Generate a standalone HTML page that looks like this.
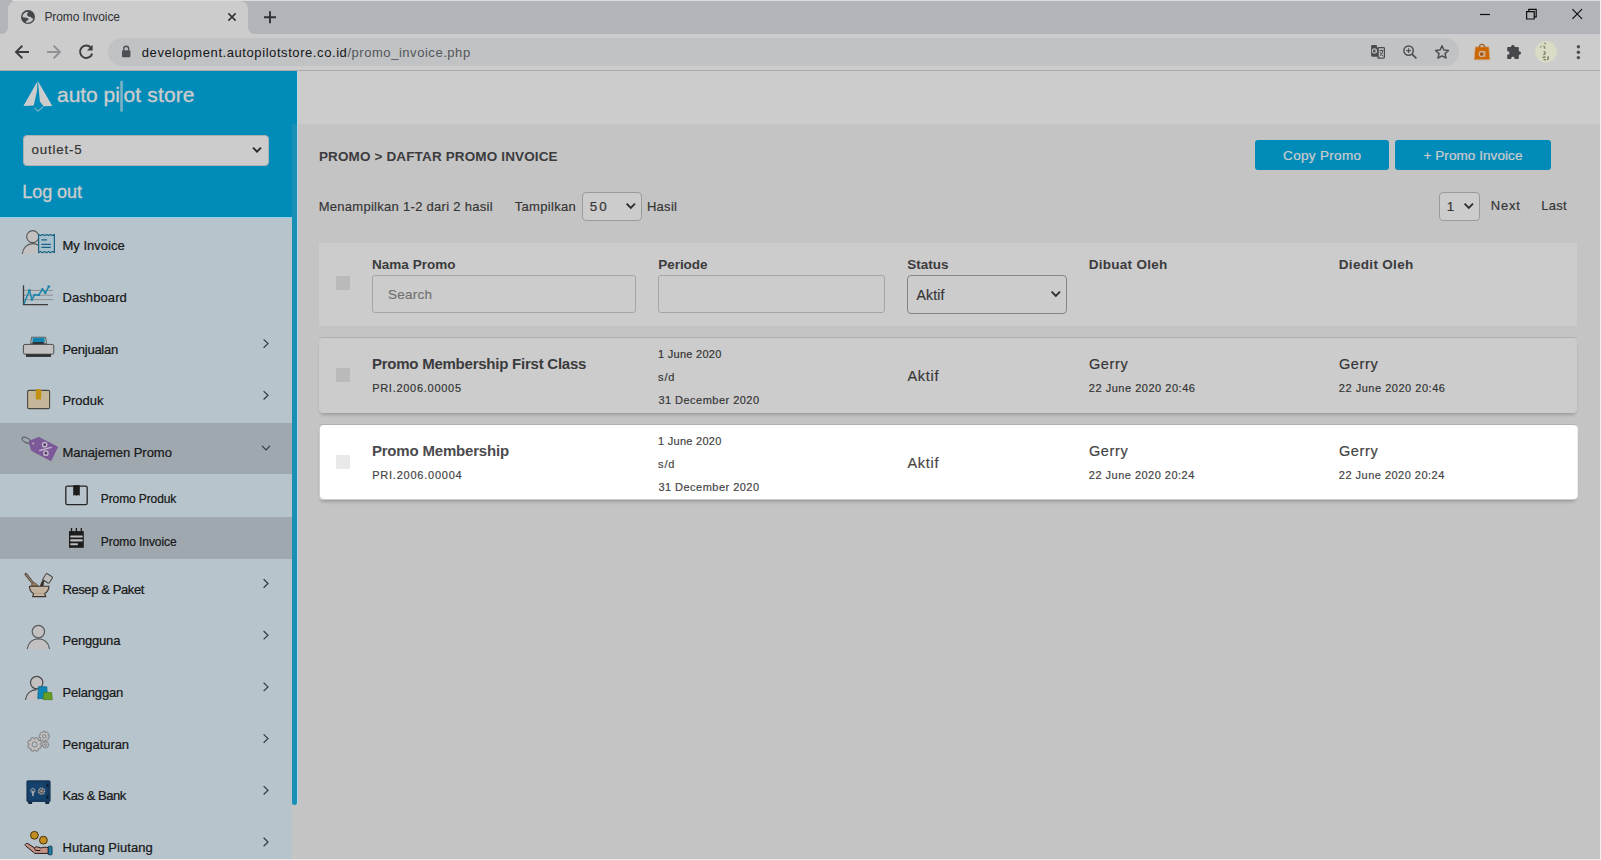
<!DOCTYPE html>
<html>
<head>
<meta charset="utf-8">
<title>Promo Invoice</title>
<style>
*{box-sizing:border-box;margin:0;padding:0}
html,body{width:1601px;height:860px;overflow:hidden;background:#f6f6f6}
body{font-family:"Liberation Sans",sans-serif;color:#444;position:relative}
.abs,.t{position:absolute}
.t{white-space:nowrap;line-height:1;transform-origin:0 0}
svg{position:absolute;overflow:visible}
/* ---------- browser chrome ---------- */
#tabstrip{left:0;top:0;width:1601px;height:34px;background:#dee1e6}
#tab{left:8px;top:1px;width:240px;height:33px;background:#fff;border-radius:8px 8px 0 0}
#toolbar{left:0;top:34px;width:1601px;height:36px;background:#fff}
#tbline{left:0;top:70px;width:1601px;height:1px;background:#d4d6da}
#omni{left:108px;top:38px;width:1351px;height:28px;border-radius:14px;background:#f1f3f4}
/* ---------- page ---------- */
#sidehead{left:0;top:71px;width:297px;height:146px;background:#00aee8}
#sidemenu{left:0;top:217px;width:292px;height:643px;background:#e5f6ff}
#topbar{left:297px;top:71px;width:1304px;height:53px;background:#fff}
#thumb{left:292px;top:124px;width:5px;height:681px;background:#1fb4e3;border-radius:0 0 3px 3px}
.act{left:0;width:292px;background:#c7d2da}
.btn{background:#00aee8;border-radius:3px;height:30px;top:140px}
.box{background:#fff;border:1px solid #bbb;border-radius:4px}
.m{color:#222;-webkit-text-stroke:.22px #222}
.sk{-webkit-text-stroke-width:.18px}
.hv{-webkit-text-stroke:.3px #fff}
.cb{width:14px;height:14px;background:#e9e9e9}
#thead{left:319px;top:243px;width:1258px;height:83px;background:#fff}
#row1{left:319px;top:337px;width:1258.3px;height:76px;background:#fff;border-top:1px solid #dcdcdc;border-radius:4px;box-shadow:0 3.5px 4px -2.5px rgba(0,0,0,.3)}
#row2{left:319px;top:424px;width:1258.3px;height:76px;background:#fff;border-top:1px solid #dcdcdc;border-radius:4px;box-shadow:0 3.5px 4px -2.5px rgba(0,0,0,.3)}
#dim{left:320px;top:425px;width:1257.5px;height:74.3px;border-radius:4px;box-shadow:0 0 0 3000px rgba(0,0,0,.2);pointer-events:none}
#botline{left:0;top:859px;width:1601px;height:1px;background:#eeeeee}
</style>
</head>
<body>
<!-- CHROME -->
<div class="abs" id="tabstrip"></div>
<div class="abs" id="tab"></div>
<div class="abs" id="toolbar"></div>
<div class="abs" id="tbline"></div>
<div class="abs" id="omni"></div>
<!--CHROME-CONTENT-START-->
<!-- top-left outer curves of tab -->
<svg style="left:0;top:0" width="260" height="34" viewBox="0 0 260 34">
  <path d="M0 34 C6 34 8 31 8 26 L8 34 Z" fill="#fff"/>
  <path d="M248 34 L248 26 C248 31 250 34 256 34 Z" fill="#fff"/>
  <!-- globe favicon -->
  <circle cx="28" cy="17" r="7" fill="#54585d"/>
  <path d="M22.5 16.9 C22.5 14.6 24.2 12.5 26.4 11.9 L28.6 12 C27.6 12.7 27.1 13.8 27.2 15 C27.3 15.9 27.9 16.4 28.9 16.6 L30.6 17 C31.4 17.4 31.6 18.2 32.5 18.4 L33.4 18.2 C33.1 20 31.8 21.5 30.2 22.2 C28.8 22.8 27.2 22.8 26 22.4 C26 21.6 26.5 21 27.4 20.6 C28.5 20.2 28.9 19.2 28.3 18.6 C27.8 18 26.8 17.7 25.6 17.5 C24.4 17.5 23.3 17.4 22.5 16.9 Z" fill="#fbfbfb"/>
  <!-- close x -->
  <path d="M228.4 13.4 L235.6 20.6 M235.6 13.4 L228.4 20.6" stroke="#3c4043" stroke-width="1.5" fill="none"/>
  <!-- new tab + -->
  <path d="M264 17.2 H276 M270 11.2 V23.2" stroke="#3c4043" stroke-width="1.9" fill="none"/>
</svg>
<div class="t" style="left:44.40px;top:10.71px;font-size:12px;color:#3c4043;letter-spacing:-0.091px" id="c_tab">Promo Invoice</div>
<!-- window controls -->
<svg style="left:1470px;top:0" width="131" height="34" viewBox="1470 0 131 34">
  <path d="M1480 14.5 H1490" stroke="#111" stroke-width="1.2"/>
  <path d="M1526.6 11.6 H1534.2 V19 H1526.6 Z M1528.8 11.4 V9.4 H1536.2 V16.8 H1534.4" stroke="#111" stroke-width="1.2" fill="none"/>
  <path d="M1572.4 9.2 L1582 18.8 M1582 9.2 L1572.4 18.8" stroke="#111" stroke-width="1.2"/>
</svg>
<!-- nav buttons -->
<svg style="left:0;top:34px" width="140" height="36" viewBox="0 34 140 36">
  <path d="M29 52 H16.5 M22.3 45.8 L16 52 L22.3 58.2" stroke="#4a4d51" stroke-width="1.9" fill="none"/>
  <path d="M47 52 H59.5 M53.7 45.8 L60 52 L53.7 58.2" stroke="#b4b7bb" stroke-width="1.9" fill="none"/>
  <path d="M90.9 47.6 A6.2 6.2 0 1 0 92.2 53.6" stroke="#4a4d51" stroke-width="1.9" fill="none"/>
  <path d="M92.6 44.8 V50.4 H87 Z" fill="#4a4d51"/>
  <!-- lock -->
  <rect x="122" y="50.2" width="8.4" height="7" rx="1" fill="#5f6368"/>
  <path d="M123.8 50.4 V48.6 A2.4 2.4 0 0 1 128.6 48.6 V50.4" stroke="#5f6368" stroke-width="1.4" fill="none"/>
</svg>
<div class="t" style="left:141.8px;top:45.6px;font-size:13px;color:#202124" id="c_url"><span id="c_url1" style="letter-spacing:0.576px">development.autopilotstore.co.id</span><span style="color:#6a6d71;letter-spacing:0.545px" id="c_url2">/promo_invoice.php</span></div>
<!-- right toolbar icons -->
<svg style="left:1360px;top:34px" width="241" height="36" viewBox="1360 34 241 36">
  <!-- translate -->
  <path d="M1372.2 45 H1376 Q1377 45 1377 46 V47.4 H1378 V56.7 H1372.2 Q1371.1 56.7 1371.1 55.6 V46.1 Q1371.1 45 1372.2 45 Z" fill="#5b5e62"/>
  <rect x="1378.2" y="47.7" width="6.2" height="10.4" rx=".8" fill="#f4f4f4" stroke="#5b5e62" stroke-width="1.2"/>
  <path d="M1377.6 56.6 L1379.4 58.7 H1377.6 Z" fill="#5b5e62"/>
  <circle cx="1374.5" cy="51" r="2.1" fill="none" stroke="#e8e8e8" stroke-width="1.1"/>
  <path d="M1374.6 51 H1376.6" stroke="#e8e8e8" stroke-width="1"/>
  <path d="M1379.4 50.6 H1383.4 M1381.4 49.6 V50.6 M1379.6 56.2 C1381.4 55 1382.4 53 1382.6 50.8 M1380 52.2 C1380.8 54 1381.8 55.2 1383.4 56.2" stroke="#5b5e62" stroke-width="1" fill="none"/>
  <!-- zoom -->
  <circle cx="1408.6" cy="50.6" r="4.7" fill="none" stroke="#5f6368" stroke-width="1.5"/>
  <path d="M1412 54.2 L1416.4 58.4" stroke="#5f6368" stroke-width="1.7"/>
  <path d="M1406.2 50.6 H1411 M1408.6 48.2 V53" stroke="#5f6368" stroke-width="1.1"/>
  <!-- star -->
  <path d="M1442 45.8 L1443.9 50 L1448.5 50.5 L1445 53.6 L1446 58.1 L1442 55.8 L1438 58.1 L1439 53.6 L1435.5 50.5 L1440.1 50 Z" fill="none" stroke="#5f6368" stroke-width="1.5" stroke-linejoin="round"/>
  <!-- orange bag -->
  <path d="M1475.2 46.8 H1488.9 L1490 59.8 H1474.1 Z" fill="#ff8000" stroke="#ffd9b0" stroke-width=".8" stroke-linejoin="round"/>
  <path d="M1479.2 47.6 C1479.2 43.2 1484.8 43.2 1484.8 47.6" stroke="#c97a3a" stroke-width="1.2" fill="none"/>
  <circle cx="1481.7" cy="54" r="2.5" fill="#c76a1c" stroke="#ffe0bd" stroke-width="1.3"/>
  <path d="M1484.7 50.9 V57" stroke="#ffe0bd" stroke-width="1.3"/>
  <!-- puzzle -->
  <path d="M1508 47.1 H1511.1 V46.6 C1511.1 44.3 1514.7 44.3 1514.7 46.6 V47.1 H1518 Q1518.8 47.1 1518.8 47.9 V51.2 H1519.2 C1521.6 51.2 1521.6 54.8 1519.2 54.8 H1518.8 V58.2 Q1518.8 59 1518 59 H1514.6 V58.4 C1514.6 56.2 1511.2 56.2 1511.2 58.4 V59 H1508 Q1507.2 59 1507.2 58.2 V54.7 H1507.8 C1510 54.7 1510 51.3 1507.8 51.3 H1507.2 V47.9 Q1507.2 47.1 1508 47.1 Z" fill="#585b60"/>
  <!-- menu dots -->
  <circle cx="1578.4" cy="46.8" r="1.7" fill="#5f6368"/>
  <circle cx="1578.4" cy="52.2" r="1.7" fill="#5f6368"/>
  <circle cx="1578.4" cy="57.6" r="1.7" fill="#5f6368"/>
</svg>
<!--CHROME-CONTENT-END-->

<!-- PAGE -->
<div class="abs" id="topbar"></div>
<div class="abs" id="sidehead"></div>
<div class="abs" id="sidemenu"></div>
<div class="abs" id="thumb"></div>
<!--SIDEBAR-START-->
<!-- logo -->
<svg style="left:20px;top:76px" width="180" height="40" viewBox="20 76 180 40">
  <path d="M37.5 81.2 L23.4 105.9 L33.7 105.6 L36.9 91.5 Z" fill="#fff"/>
  <path d="M38 81.2 L52.3 105.9 L43.6 106.3 L39.9 101.6 L38.7 89 Z" fill="#fff"/>
  <path d="M34.6 107.8 L37.8 111.3 L43.3 106.6" stroke="#fff" stroke-width="0.9" fill="none"/>
  <rect x="120.3" y="80.9" width="2.5" height="30.7" fill="#fff" opacity=".62"/>
</svg>
<div class="t hv" id="s_logo1" style="left:57.00px;top:83.61px;font-size:21px;letter-spacing:-0.025px;color:#fff">auto pi</div>
<div class="t hv" id="s_logo2" style="left:123.50px;top:83.61px;font-size:21px;letter-spacing:0.142px;color:#fff">ot store</div>
<!-- outlet select -->
<div class="abs" style="left:23px;top:135px;width:246px;height:31px;background:#fff;border:1px solid #d7dde0;border-radius:4px"></div>
<div class="t sk" id="s_outlet" style="left:31.45px;top:143.40px;font-size:13.33px;letter-spacing:0.815px;color:#424242">outlet-5</div>
<svg style="left:250px;top:144px" width="14" height="12" viewBox="0 0 14 12"><path d="M3 3.6 L7 7.6 L11 3.6" stroke="#333" stroke-width="1.9" fill="none"/></svg>
<div class="t hv" id="s_logout" style="left:22.25px;top:183.00px;font-size:18px;letter-spacing:-0.043px;color:#fff">Log out</div>

<!-- active backgrounds -->
<div class="abs act" style="top:423px;height:51px"></div>
<div class="abs act" style="top:517px;height:42px"></div>

<!-- menu labels -->
<div class="t m" id="m1" style="left:62.45px;top:239.30px;font-size:13px;letter-spacing:0.005px">My Invoice</div>
<div class="t m" id="m2" style="left:62.45px;top:291.00px;font-size:13px;letter-spacing:0.101px">Dashboard</div>
<div class="t m" id="m3" style="left:62.45px;top:342.71px;font-size:13px;letter-spacing:-0.262px">Penjualan</div>
<div class="t m" id="m4" style="left:62.45px;top:394.40px;font-size:13px;letter-spacing:-0.040px">Produk</div>
<div class="t m" id="m5" style="left:62.45px;top:446.10px;font-size:13px;letter-spacing:-0.026px">Manajemen Promo</div>
<div class="t m" id="m6" style="left:100.80px;top:492.76px;font-size:12px;letter-spacing:-0.110px">Promo Produk</div>
<div class="t m" id="m7" style="left:100.80px;top:535.80px;font-size:12px;letter-spacing:-0.070px">Promo Invoice</div>
<div class="t m" id="m8" style="left:62.45px;top:582.60px;font-size:13px;letter-spacing:-0.403px">Resep &amp; Paket</div>
<div class="t m" id="m9" style="left:62.45px;top:634.30px;font-size:13px;letter-spacing:-0.193px">Pengguna</div>
<div class="t m" id="m10" style="left:62.45px;top:686.00px;font-size:13px;letter-spacing:-0.163px">Pelanggan</div>
<div class="t m" id="m11" style="left:62.45px;top:737.60px;font-size:13px;letter-spacing:-0.066px">Pengaturan</div>
<div class="t m" id="m12" style="left:62.45px;top:789.30px;font-size:13px;letter-spacing:-0.445px">Kas &amp; Bank</div>
<div class="t m" id="m13" style="left:62.45px;top:840.60px;font-size:13px;letter-spacing:0.054px">Hutang Piutang</div>
<!--SIDE-ICONS-START-->
<svg style="left:0;top:217px" width="292" height="643" viewBox="0 217 292 643">
 <!-- chevrons -->
 <g stroke="#3f4850" stroke-width="1.2" fill="none">
  <path d="M263.6 339.4 L268 343.6 L263.6 347.8"/>
  <path d="M263.6 391.1 L268 395.3 L263.6 399.5"/>
  <path d="M262 445.8 L266 449.8 L270 445.8"/>
  <path d="M263.6 579.3 L268 583.5 L263.6 587.7"/>
  <path d="M263.6 631 L268 635.2 L263.6 639.4"/>
  <path d="M263.6 682.7 L268 686.9 L263.6 691.1"/>
  <path d="M263.6 734.4 L268 738.6 L263.6 742.8"/>
  <path d="M263.6 786.1 L268 790.3 L263.6 794.5"/>
  <path d="M263.6 837.8 L268 842 L263.6 846.2"/>
 </g>
 <!-- 1 My Invoice -->
 <g>
  <path d="M22.2 254 C23 247.6 27.4 243.6 32.7 243.6 C38 243.6 42 247 43.4 254 Z" fill="#f4f2f2"/>
  <path d="M22.2 254 C23 247.6 27.4 243.6 32.7 243.6 C36 243.6 38.6 245 40.4 247.2" fill="none" stroke="#6e6e6e" stroke-width="1.1"/>
  <circle cx="32.7" cy="236.6" r="6" fill="#f4f2f2" stroke="#6e6e6e" stroke-width="1.1"/>
  <path d="M38.6 234.4 L40.6 235.6 L42.6 234.4 L44.6 235.6 L46.6 234.4 L48.6 235.6 L50.6 234.4 L52.6 235.6 L54.4 234.4 V252.6 L52.6 251.6 L50.6 252.8 L48.6 251.6 L46.6 252.8 L44.6 251.6 L42.6 252.8 L40.6 251.6 L38.6 252.8 Z" fill="#d2f0ff" stroke="#1e7ba6" stroke-width="1.2" stroke-linejoin="round"/>
  <path d="M41.4 239.9 H47 M41.4 244.4 H50.8 M41.4 247.3 H50.8" stroke="#1e7ba6" stroke-width="1.3"/>
 </g>
 <!-- 2 Dashboard -->
 <g fill="none">
  <path d="M24 290.4 H53 M24 295.2 H53 M24 299.6 H53" stroke="#b3b3b3" stroke-width="1"/>
  <path d="M23.5 285.2 V304.6 H48" stroke="#4c4c4c" stroke-width="1.3"/>
  <path d="M24.2 303.6 L29.4 290.2 L31.9 299.6 L34.6 294.9 L38.8 294.9 L42.4 289.4 L45.3 292.9 L48.8 286.6" stroke="#25a7d6" stroke-width="1.5" stroke-linejoin="round" stroke-linecap="round"/>
  <g fill="#25a7d6"><circle cx="29.4" cy="290.2" r="1.3"/><circle cx="31.9" cy="299.6" r="1.3"/><circle cx="34.6" cy="294.9" r="1.2"/><circle cx="38.8" cy="294.9" r="1.2"/><circle cx="42.4" cy="289.4" r="1.3"/><circle cx="45.3" cy="292.9" r="1.2"/><circle cx="48.8" cy="286.6" r="1.4"/></g>
 </g>
 <!-- 3 Penjualan -->
 <g>
  <path d="M31.6 337.2 H45.6 L46.6 343.6 H30.6 Z" fill="#dfeff6" stroke="#5b5b5b" stroke-width=".8"/>
  <path d="M32.8 337.8 H44.4 L44.8 342.4 H32.4 Z" fill="#16a6dc"/>
  <rect x="32.6" y="342" width="11.2" height="2.4" fill="#3a4349"/>
  <rect x="23.4" y="344.4" width="30.4" height="9.8" rx="1.6" fill="#f3f1f1" stroke="#5e5e5e" stroke-width="1"/>
  <rect x="26" y="354.2" width="25" height="2.7" fill="#3c3c3c"/>
 </g>
 <!-- 4 Produk -->
 <g>
  <rect x="27.6" y="390.4" width="22" height="18.2" rx="1.4" fill="#f6e4c0" stroke="#5c5a52" stroke-width="1.1"/>
  <rect x="35.8" y="389" width="5.4" height="10.6" rx="1.2" fill="#f2b716"/>
 </g>
 <!-- 5 Promo tag -->
 <g>
  <ellipse cx="26.2" cy="440.2" rx="4.6" ry="2.3" transform="rotate(28 26.2 440.2)" fill="none" stroke="#636a6f" stroke-width=".9"/>
  <path d="M38.8 437.3 L57.6 447 L51 460.8 L31.6 450.6 L28.8 441.4 Z" fill="#9d70c1" stroke="#8a5fae" stroke-width=".6" stroke-linejoin="round"/>
  <circle cx="33.2" cy="443.4" r="1" fill="#e6daf0"/>
  <circle cx="44.7" cy="444.7" r="2.1" fill="#6a4a86" stroke="#efe2fa" stroke-width="1.5"/>
  <circle cx="45.9" cy="453.2" r="2.1" fill="#6a4a86" stroke="#efe2fa" stroke-width="1.5"/>
  <path d="M39.8 450.5 L51.2 447.4" stroke="#efe2fa" stroke-width="1.5" stroke-linecap="round"/>
 </g>
 <!-- 6 Promo Produk -->
 <g>
  <rect x="65.8" y="486.2" width="21.4" height="18.4" rx="1.6" fill="none" stroke="#2c2f31" stroke-width="1.3"/>
  <path d="M73.2 485.2 H79.8 V495.8 L78.2 494.9 L76.5 495.8 L74.8 494.9 L73.2 495.8 Z" fill="#262322"/>
 </g>
 <!-- 7 Promo Invoice -->
 <g>
  <rect x="69" y="531.1" width="14.8" height="16.7" fill="#242323"/>
  <path d="M71.5 528 V532 M76.4 528 V532 M81.3 528 V532" stroke="#242323" stroke-width="1.3"/>
  <rect x="70.2" y="535.4" width="12.6" height="2.1" rx=".8" fill="#e9ecef"/>
  <rect x="70.2" y="539.3" width="12.6" height="2.1" rx=".8" fill="#e9ecef"/>
  <rect x="70.2" y="543.2" width="7.8" height="2.1" rx=".8" fill="#e9ecef"/>
 </g>
 <!-- 8 Resep -->
 <g>
  <path d="M25.8 574.2 L32.8 583" stroke="#5c4d3f" stroke-width="2.7" stroke-linecap="round"/>
  <path d="M25.8 574.2 L32.8 583" stroke="#b59d82" stroke-width="1.3" stroke-linecap="round"/>
  <path d="M31.6 586 C31.2 583.6 33 582 35 583 C36.6 583.8 37.6 584.8 37.8 586 Z" fill="#c8a27e" stroke="#5c4d3f" stroke-width=".7"/>
  <path d="M43.8 578.6 C42.2 581 41 583.6 40.4 586 H43 C43.2 583.6 43.8 581.4 44.8 579.6 Z" fill="#4b3c33" stroke="#4b3c33" stroke-width=".8"/>
  <rect x="43.9" y="574.6" width="7.5" height="7.5" rx="1" transform="rotate(33 47.6 578.4)" fill="#f0eeee" stroke="#5a5a5a" stroke-width="1"/>
  <path d="M29.4 586.2 H49 C48.8 589.8 47 592.2 44.6 593.6 L45.8 596.6 H32.6 L33.6 593.6 C31.2 592.2 29.6 589.8 29.4 586.2 Z" fill="#f7e0ca" stroke="#4a4038" stroke-width="1.1" stroke-linejoin="round"/>
  <path d="M33.8 593.4 H44.4" stroke="#d9bfa6" stroke-width=".8"/>
 </g>
 <!-- 9 Pengguna -->
 <g>
  <path d="M27.2 649 C28.2 642.6 32.6 638.8 38.4 638.8 C44.2 638.8 48.6 642.6 49.6 649 Z" fill="#f3f1f1"/>
  <path d="M27.2 649 C28.2 642.6 32.6 638.8 38.4 638.8 C44.2 638.8 48.6 642.6 49.6 649" fill="none" stroke="#717171" stroke-width="1.2"/>
  <circle cx="38.4" cy="631.6" r="6.2" fill="#f3f1f1" stroke="#717171" stroke-width="1.2"/>
 </g>
 <!-- 10 Pelanggan -->
 <g>
  <path d="M25.4 699.8 C26.4 693.6 30.8 689.8 36.6 689.6 L38 689.8 V699.8 Z" fill="#f3f1f1"/>
  <path d="M25.4 699.8 C26.4 693.6 30.8 689.8 36.6 689.6" fill="none" stroke="#5c5c5c" stroke-width="1.2"/>
  <circle cx="36.7" cy="682.6" r="6.2" fill="#f3f1f1" stroke="#5c5c5c" stroke-width="1.2"/>
  <path d="M38.4 686.8 H46.8 L47.2 698.6 H37.8 Z" fill="#12a9e4" stroke="#0d7fb0" stroke-width=".8" stroke-linejoin="round"/>
  <path d="M43.8 692.6 H51.6 L52.2 699.6 H43.2 Z" fill="#7fc62e" stroke="#5a9a1c" stroke-width=".8" stroke-linejoin="round"/>
 </g>
 <!-- 11 Pengaturan (gears) -->
 <g fill="#efeded" stroke="#989898" stroke-width=".9" stroke-linejoin="round">
  <path d="M48.29 735.11 L49.39 735.23 L49.39 737.37 L48.29 737.49 L47.96 738.28 L48.66 739.14 L47.14 740.66 L46.28 739.96 L45.49 740.29 L45.37 741.39 L43.23 741.39 L43.11 740.29 L42.32 739.96 L41.46 740.66 L39.94 739.14 L40.64 738.28 L40.31 737.49 L39.21 737.37 L39.21 735.23 L40.31 735.11 L40.64 734.32 L39.94 733.46 L41.46 731.94 L42.32 732.64 L43.11 732.31 L43.23 731.21 L45.37 731.21 L45.49 732.31 L46.28 732.64 L47.14 731.94 L48.66 733.46 L47.96 734.32 Z"/>
  <circle cx="44.3" cy="736.3" r="1.7" fill="#e5f6ff"/>
  <path d="M48.21 744.39 L48.89 744.59 L48.62 746.12 L47.91 746.08 L47.55 746.58 L47.81 747.25 L46.45 747.99 L46.04 747.40 L45.42 747.43 L45.07 748.06 L43.64 747.45 L43.84 746.77 L43.43 746.30 L42.72 746.41 L42.30 744.92 L42.96 744.65 L43.07 744.04 L42.54 743.56 L43.45 742.30 L44.08 742.64 L44.62 742.35 L44.67 741.63 L46.21 741.56 L46.33 742.26 L46.90 742.50 L47.49 742.10 L48.52 743.26 L48.04 743.79 Z"/>
  <circle cx="45.6" cy="744.8" r="1" fill="#e5f6ff"/>
  <path d="M40.25 744.98 L41.58 745.71 L40.46 748.41 L39.01 747.98 L38.18 748.81 L38.61 750.26 L35.91 751.38 L35.18 750.05 L34.02 750.05 L33.29 751.38 L30.59 750.26 L31.02 748.81 L30.19 747.98 L28.74 748.41 L27.62 745.71 L28.95 744.98 L28.95 743.82 L27.62 743.09 L28.74 740.39 L30.19 740.82 L31.02 739.99 L30.59 738.54 L33.29 737.42 L34.02 738.75 L35.18 738.75 L35.91 737.42 L38.61 738.54 L38.18 739.99 L39.01 740.82 L40.46 740.39 L41.58 743.09 L40.25 743.82 Z"/>
  <circle cx="34.6" cy="744.4" r="2.5" fill="#e5f6ff"/>
 </g>
 <!-- 12 Kas & Bank (safe) -->
 <g>
  <rect x="28.2" y="801" width="4" height="2.9" rx=".6" fill="#16314d"/>
  <rect x="45.2" y="801" width="4" height="2.9" rx=".6" fill="#16314d"/>
  <rect x="26.4" y="780.2" width="24.2" height="21.8" rx="1.6" fill="#1b4674"/>
  <rect x="28.6" y="782.4" width="18.2" height="17.4" fill="#1c5489"/>
  <rect x="46" y="783.8" width="2.6" height="3.2" rx=".6" fill="#132e49"/>
  <rect x="46" y="795.6" width="2.6" height="3.2" rx=".6" fill="#132e49"/>
  <circle cx="32.9" cy="790.6" r="2.1" fill="none" stroke="#d3d6d8" stroke-width=".9"/>
  <rect x="32.2" y="790.4" width="1.5" height="5.6" rx=".5" fill="#e6e6e6"/>
  <circle cx="41.5" cy="791.2" r="3" fill="#6a7076" stroke="#d9d6d2" stroke-width="1.3" stroke-dasharray="1.1 .7"/>
  <circle cx="41.5" cy="791.2" r="1.1" fill="#c9c6c2"/>
 </g>
 <!-- 13 Hutang Piutang -->
 <g>
  <circle cx="34.4" cy="835.3" r="3.9" fill="#f4b32c" stroke="#5a3d08" stroke-width="1"/>
  <circle cx="43.4" cy="840.2" r="3.9" fill="#f4b32c" stroke="#5a3d08" stroke-width="1"/>
  <path d="M25.6 844 C26.4 843 27.6 843.4 28.6 844 L34.6 848 C35.2 846.8 36.4 846.6 37.6 847 L41 848 C43 847.2 46 847 48.2 847.6 V853.4 H36 C34.8 853.4 34.2 853 33.4 852.2 L25.8 846 C25 845.4 25 844.6 25.6 844 Z" fill="#f6b9a9" stroke="#2d1c1c" stroke-width="1" stroke-linejoin="round"/>
  <path d="M34.6 848.2 C34.4 849.6 35.4 850.4 37 850.5 H40.4" fill="none" stroke="#2d1c1c" stroke-width="1"/>
  <rect x="48.4" y="846.2" width="3.6" height="8.6" rx=".7" fill="#289ed2" stroke="#123f57" stroke-width=".9"/>
 </g>
</svg>
<!--SIDE-ICONS-END-->
<!--SIDEBAR-END-->

<!--MAIN-START-->
<div class="t" id="h_bc" style="left:318.95px;top:149.91px;font-size:13.5px;letter-spacing:0.140px;font-weight:bold;color:#4b4b4e">PROMO &gt; DAFTAR PROMO INVOICE</div>
<div class="abs btn" style="left:1255px;width:134px"></div>
<div class="abs btn" style="left:1395px;width:156px"></div>
<div class="t sk" id="h_b1" style="left:1283.05px;top:148.71px;font-size:13.5px;letter-spacing:0.329px;color:#fff">Copy Promo</div>
<div class="t sk" id="h_b2" style="left:1423.50px;top:148.71px;font-size:13.5px;letter-spacing:0.069px;color:#fff">+ Promo Invoice</div>

<div class="t sk" id="p_show" style="left:318.65px;top:199.80px;font-size:13px;letter-spacing:0.288px">Menampilkan 1-2 dari 2 hasil</div>
<div class="t sk" id="p_tamp" style="left:514.70px;top:199.80px;font-size:13px;letter-spacing:0.324px">Tampilkan</div>
<div class="abs box" style="left:582px;top:192px;width:60px;height:29px;border-color:#c2c2c2"></div>
<div class="t sk" id="p_50" style="left:589.70px;top:199.80px;font-size:13.33px;letter-spacing:2.100px">50</div>
<svg style="left:624px;top:200px" width="14" height="12" viewBox="0 0 14 12"><path d="M2.6 3.6 L6.8 7.8 L11 3.6" stroke="#3a3a3a" stroke-width="1.9" fill="none"/></svg>
<div class="t sk" id="p_hasil" style="left:646.95px;top:199.80px;font-size:13px;letter-spacing:0.276px">Hasil</div>
<div class="abs box" style="left:1439px;top:192px;width:41px;height:29px;border-color:#c2c2c2"></div>
<div class="t sk" id="p_1" style="left:1446.80px;top:199.50px;font-size:13.33px;letter-spacing:-5.100px">1</div>
<svg style="left:1462px;top:200px" width="14" height="12" viewBox="0 0 14 12"><path d="M2.6 3.6 L6.8 7.8 L11 3.6" stroke="#3a3a3a" stroke-width="1.9" fill="none"/></svg>
<div class="t sk" id="p_next" style="left:1490.65px;top:198.60px;font-size:13px;letter-spacing:0.867px">Next</div>
<div class="t sk" id="p_last" style="left:1541.30px;top:198.60px;font-size:13px;letter-spacing:0.250px">Last</div>

<!-- table header -->
<div class="abs" id="thead"></div>
<div class="abs cb" style="left:336px;top:276px"></div>
<div class="t th" id="th1" style="left:372.00px;top:258.21px;font-size:13.5px;letter-spacing:0.028px;font-weight:bold;color:#4b4b4e">Nama Promo</div>
<div class="t th" id="th2" style="left:658.30px;top:258.21px;font-size:13.5px;letter-spacing:-0.050px;font-weight:bold;color:#4b4b4e">Periode</div>
<div class="t th" id="th3" style="left:907.30px;top:258.21px;font-size:13.5px;letter-spacing:-0.010px;font-weight:bold;color:#4b4b4e">Status</div>
<div class="t th" id="th4" style="left:1088.80px;top:258.21px;font-size:13.5px;letter-spacing:0.265px;font-weight:bold;color:#4b4b4e">Dibuat Oleh</div>
<div class="t th" id="th5" style="left:1338.80px;top:258.21px;font-size:13.5px;letter-spacing:0.315px;font-weight:bold;color:#4b4b4e">Diedit Oleh</div>
<div class="abs box" style="left:372px;top:275px;width:264px;height:38px;border-color:#cfcfcf;border-radius:3px"></div>
<div class="t sk" id="th_search" style="left:388.05px;top:287.91px;font-size:13.5px;letter-spacing:0.220px;color:#8f8f8f">Search</div>
<div class="abs box" style="left:658px;top:275px;width:227px;height:38px;border-color:#cfcfcf;border-radius:3px"></div>
<div class="abs box" style="left:907px;top:275px;width:160px;height:39px;border-color:#a6a6a6"></div>
<div class="t sk" id="th_aktif" style="left:916.60px;top:288.30px;font-size:14px;letter-spacing:0.149px">Aktif</div>
<svg style="left:1049px;top:288px" width="14" height="12" viewBox="0 0 14 12"><path d="M2.6 3.6 L6.8 7.8 L11 3.6" stroke="#3a3a3a" stroke-width="1.9" fill="none"/></svg>

<!-- rows -->
<div class="abs" id="row1"></div>
<div class="abs" id="row2"></div>
<div class="abs cb" style="left:336px;top:368px"></div>
<div class="abs cb" style="left:336px;top:455px"></div>

<div class="t" id="r1_t" style="left:371.90px;top:355.80px;font-size:15px;letter-spacing:-0.236px;font-weight:bold;color:#4b4b4e">Promo Membership First Class</div>
<div class="t sk" id="r1_c" style="left:372.15px;top:382.80px;font-size:11px;letter-spacing:0.723px">PRI.2006.00005</div>
<div class="t sk" id="r1_p1" style="left:658.05px;top:349.21px;font-size:11px;letter-spacing:0.270px">1 June 2020</div>
<div class="t sk" id="r1_p2" style="left:658.10px;top:372.00px;font-size:11px;letter-spacing:0.800px">s/d</div>
<div class="t sk" id="r1_p3" style="left:658.40px;top:395.00px;font-size:11px;letter-spacing:0.473px">31 December 2020</div>
<div class="t sk" id="r1_s" style="left:907.50px;top:369.21px;font-size:14.5px;letter-spacing:0.702px">Aktif</div>
<div class="t sk" id="r1_u1" style="left:1088.90px;top:356.91px;font-size:14.5px;letter-spacing:0.676px">Gerry</div>
<div class="t sk" id="r1_d1" style="left:1088.80px;top:382.80px;font-size:11px;letter-spacing:0.521px">22 June 2020 20:46</div>
<div class="t sk" id="r1_u2" style="left:1338.90px;top:356.91px;font-size:14.5px;letter-spacing:0.676px">Gerry</div>
<div class="t sk" id="r1_d2" style="left:1338.80px;top:382.80px;font-size:11px;letter-spacing:0.521px">22 June 2020 20:46</div>

<div class="t" id="r2_t" style="left:371.90px;top:442.80px;font-size:15px;letter-spacing:-0.187px;font-weight:bold;color:#4b4b4e">Promo Membership</div>
<div class="t sk" id="r2_c" style="left:372.15px;top:469.80px;font-size:11px;letter-spacing:0.774px">PRI.2006.00004</div>
<div class="t sk" id="r2_p1" style="left:658.05px;top:436.21px;font-size:11px;letter-spacing:0.270px">1 June 2020</div>
<div class="t sk" id="r2_p2" style="left:658.10px;top:459.00px;font-size:11px;letter-spacing:0.800px">s/d</div>
<div class="t sk" id="r2_p3" style="left:658.40px;top:482.00px;font-size:11px;letter-spacing:0.473px">31 December 2020</div>
<div class="t sk" id="r2_s" style="left:907.50px;top:456.21px;font-size:14.5px;letter-spacing:0.702px">Aktif</div>
<div class="t sk" id="r2_u1" style="left:1088.90px;top:443.91px;font-size:14.5px;letter-spacing:0.676px">Gerry</div>
<div class="t sk" id="r2_d1" style="left:1088.80px;top:469.80px;font-size:11px;letter-spacing:0.488px">22 June 2020 20:24</div>
<div class="t sk" id="r2_u2" style="left:1338.90px;top:443.91px;font-size:14.5px;letter-spacing:0.676px">Gerry</div>
<div class="t sk" id="r2_d2" style="left:1338.80px;top:469.80px;font-size:11px;letter-spacing:0.488px">22 June 2020 20:24</div>
<!--MAIN-END-->

<div class="abs" id="dim"></div>
<svg style="left:1530px;top:38px" width="32" height="28" viewBox="1530 38 32 28">
  <circle cx="1546" cy="51.8" r="10.8" fill="#dbdcc6"/>
  <g fill="none" stroke="#55573a" stroke-linecap="round">
   <path d="M1544.6 43.2 l.9 .5" stroke-width="1.4" opacity=".55"/>
   <path d="M1540.2 47.2 l1.4 -.9" stroke-width="1.3" opacity=".4"/>
   <path d="M1544 46.2 l.9 1.9" stroke-width="1.5" opacity=".6"/>
   <path d="M1544.2 51.6 l1.2 1.6 l-1.6 1.4" stroke-width="1.4" opacity=".65"/>
   <path d="M1543 57.4 l2 -.4 M1544 59.6 l1.4 .2" stroke-width="1.4" opacity=".7"/>
   <path d="M1548.2 57 l-.4 2.6" stroke-width="1.4" opacity=".8"/>
  </g>
</svg>
<div class="abs" style="left:12px;top:0;width:1589px;height:1px;background:#dcdcdc"></div>
<div class="abs" style="left:1600px;top:0;width:1px;height:860px;background:#eeeeee"></div>
<div class="abs" style="left:0;top:217px;width:292px;height:1px;background:#8fd0ea"></div>
<div class="abs" style="left:297px;top:71px;width:1px;height:734px;background:#b4dcec;opacity:.85"></div>
<div class="abs" id="botline"></div>
</body>
</html>
